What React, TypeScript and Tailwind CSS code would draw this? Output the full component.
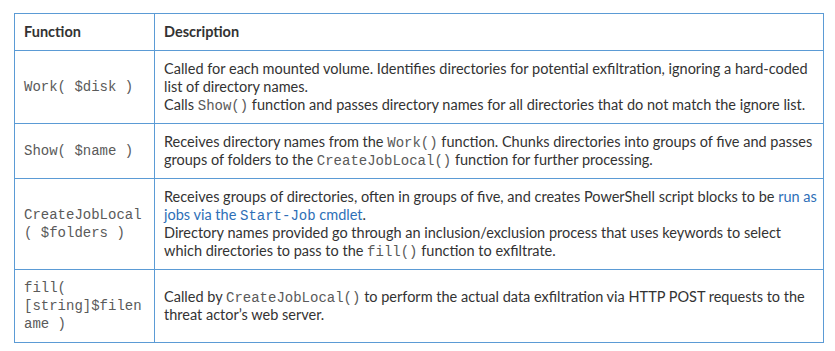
const code = "font-['Liberation_Mono','Courier_New',monospace] text-[14px] text-[#5a5a5a]"

function C({ children }: { children: React.ReactNode }) {
    return <span className={code + " leading-[14px]"}>{children}</span>
}

const rows = [
    {
        fn: "Work( $disk )",
        desc: <>
            Called for each mounted volume. Identifies directories for potential exfiltration, ignoring a hard-coded list of directory names.<br />
            Calls <C>Show()</C> function and passes directory names for all directories that do not match the ignore list.
        </>,
    },
    {
        fn: "Show( $name )",
        desc: <>
            Receives directory names from the <C>Work()</C> function. Chunks directories into groups of five and passes groups of folders to the <C>CreateJobLocal()</C> function for further processing.
        </>,
    },
    {
        fn: <>CreateJobLocal<br />( $folders )</>,
        desc: <>
            Receives groups of directories, often in groups of five, and creates PowerShell script blocks to be <span className="text-[#2e6fb7]">run as jobs via the <C><span className="text-[#2e6fb7]">Start-Job</span></C> cmdlet</span>.<br />
            Directory names provided go through an inclusion/exclusion process that uses keywords to select which directories to pass to the <C>fill()</C> function to exfiltrate.
        </>,
    },
    {
        fn: <>fill(<br />[string]$filen<br />ame )</>,
        desc: <>
            Called by <C>CreateJobLocal()</C> to perform the actual data exfiltration via HTTP POST requests to the threat actor’s web server.
        </>,
    },
]

export default function App() {
    return <div className="bg-white w-[835px] h-[351px] pt-[13px] pl-[14px] font-['Lato','Liberation_Sans',sans-serif] text-[14.5px] leading-[18px] text-[#333]">
        <table className="w-[810px] border-collapse">
            <thead>
                <tr>
                    <th className="w-[140px] border border-[#5b9bd5] px-[9px] py-[9px] text-left font-bold">Function</th>
                    <th className="border border-[#5b9bd5] pl-[9px] pr-[4px] py-[9px] text-left font-bold">Description</th>
                </tr>
            </thead>
            <tbody>
                {rows.map((r, i) => (
                    <tr key={i}>
                        <td className={"border border-[#5b9bd5] px-[9px] py-[9px] align-middle leading-[18px] " + code}>{r.fn}</td>
                        <td className="border border-[#5b9bd5] pl-[9px] pr-[4px] py-[9px] align-middle">{r.desc}</td>
                    </tr>
                ))}
            </tbody>
        </table>
    </div>
}
